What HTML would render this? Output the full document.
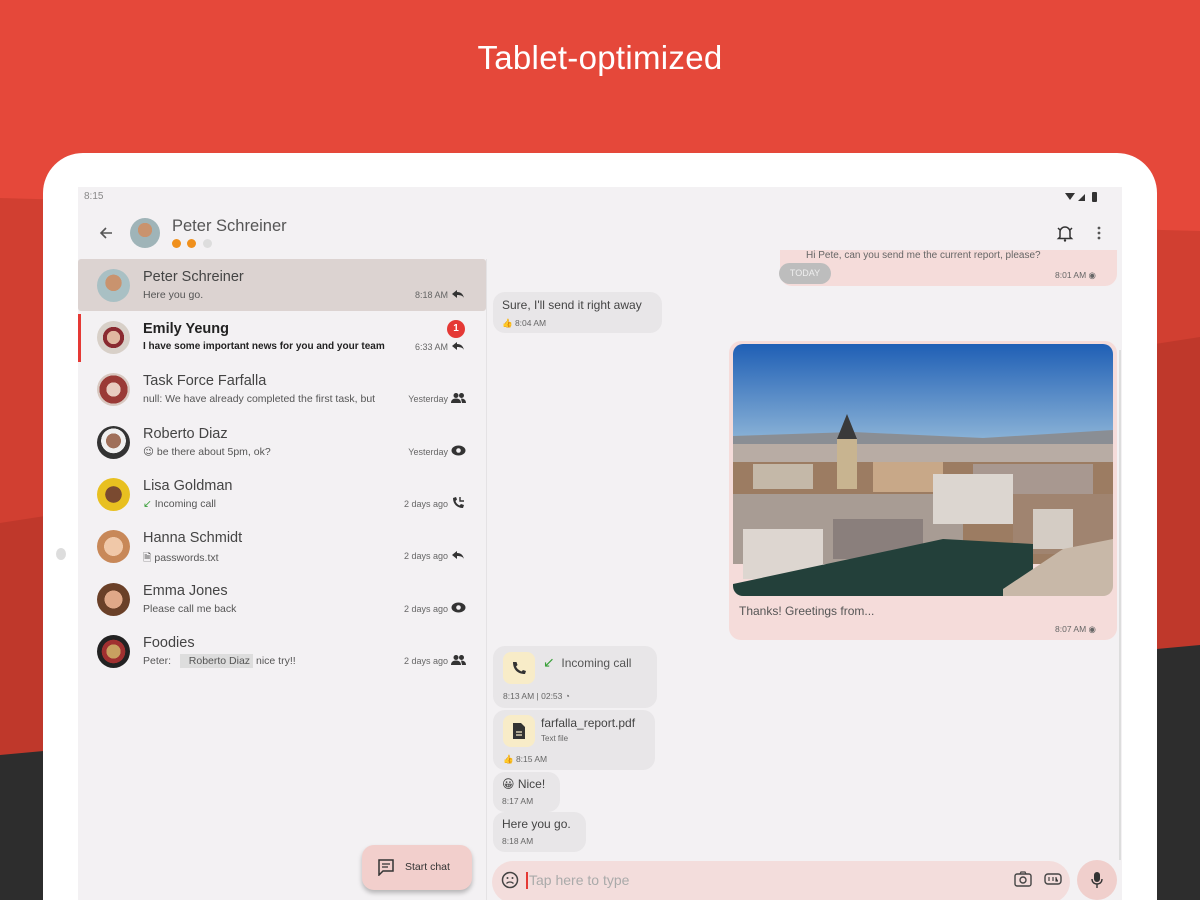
<!DOCTYPE html>
<html><head><meta charset="utf-8"><style>
*{margin:0;padding:0;box-sizing:border-box}
html,body{width:1200px;height:900px;overflow:hidden}
body{position:relative;font-family:"Liberation Sans","DejaVu Sans",sans-serif;background:#e5483a}
.a{position:absolute}
.t{position:absolute;white-space:nowrap}
.av{position:absolute;width:33px;height:33px;border-radius:50%}
.nm{position:absolute;left:143px;font-size:14.5px;color:#444}
.sb{position:absolute;left:143px;font-size:10.5px;color:#555}
.tm{position:absolute;font-size:9px;color:#666;text-align:right}
.ic{position:absolute;left:451px}
.bub{position:absolute;border-radius:12px}
.in{background:#e8e6e8}
.out{background:#f5dcda}
.mt{font-size:8.5px;color:#666}
</style></head><body>
<svg class="a" style="left:0;top:0" width="1200" height="900">
<rect width="1200" height="900" fill="#e5483a"/>
<polygon points="0,198 600,215 1200,231 1200,900 0,900" fill="#d13f31"/>
<polygon points="0,523 600,430 1200,337 1200,900 0,900" fill="#bf382b"/>
<polygon points="0,755 600,700 1200,645 1200,900 0,900" fill="#2d2d2d"/>
</svg>
<div class="t" style="left:0;width:1200px;top:39px;text-align:center;color:#fff;font-size:33px;letter-spacing:0.3px">Tablet-optimized</div>
<div class="a" style="left:43px;top:153px;width:1114px;height:747px;background:#fff;border-radius:40px 40px 0 0"></div>
<div class="a" style="left:56px;top:548px;width:10px;height:12px;border-radius:50%;background:#ddd"></div>
<div class="a" style="left:78px;top:187px;width:1044px;height:713px;background:#f3f1f3"></div>
<!-- status -->
<div class="t" style="left:84px;top:191px;font-size:10px;color:#888">8:15</div>
<svg class="a" style="left:1064px;top:191px" width="40" height="12"><path d="M1 2 L11 2 L6 9Z" fill="#333"/><path d="M14 10 L21 3 L21 10Z" fill="#333"/><rect x="28" y="1" width="5" height="10" rx="1" fill="#333"/></svg>
<!-- header -->
<svg class="a" style="left:98px;top:226px" width="16" height="14"><path d="M14 7H3M8 2L3 7L8 12" stroke="#555" stroke-width="1.6" fill="none"/></svg>
<div class="av" style="left:130px;top:218px;width:30px;height:30px;background:radial-gradient(circle at 50% 40%,#c9936e 0 30%,#9fb4b8 31%)"></div>
<div class="t" style="left:172px;top:217px;font-size:16.5px;color:#555">Peter Schreiner</div>
<div class="a" style="left:172px;top:239px;width:9px;height:9px;border-radius:50%;background:#f0901c"></div>
<div class="a" style="left:187px;top:239px;width:9px;height:9px;border-radius:50%;background:#f0901c"></div>
<div class="a" style="left:203px;top:239px;width:9px;height:9px;border-radius:50%;background:#ddd"></div>
<svg class="a" style="left:1056px;top:224px" width="18" height="18"><path d="M4 13V8a5 5 0 0 1 10 0v5l1.5 1.5h-13Z M2 4l2 2M16 4l-2 2" stroke="#333" stroke-width="1.5" fill="none"/><circle cx="9" cy="16.5" r="1.2" fill="#333"/></svg>
<svg class="a" style="left:1096px;top:225px" width="6" height="16"><circle cx="3" cy="3" r="1.4" fill="#555"/><circle cx="3" cy="8" r="1.4" fill="#555"/><circle cx="3" cy="13" r="1.4" fill="#555"/></svg>
<!-- list -->
<div class="a" style="left:78px;top:259px;width:408px;height:52px;background:#dcd3d1;border-radius:3px"></div>
<div class="a" style="left:78px;top:314px;width:3px;height:48px;background:#e53935"></div>
<div class="a" style="left:486px;top:259px;width:1px;height:641px;background:#e4e2e4"></div>

<div class="av" style="left:97px;top:269px;background:radial-gradient(circle at 50% 42%,#c9936e 0 32%,#a9c0c4 33%)"></div>
<div class="nm" style="top:269px">Peter Schreiner</div><div class="sb" style="top:289px">Here you go.</div>
<div class="tm" style="top:290px;right:752px">8:18 AM</div>
<svg class="ic" style="top:288px" width="14" height="12"><path d="M6 2L1 6L6 10V7c4 0 6 1 7 3-1-4-3-6-7-6Z" fill="#333"/></svg>

<div class="av" style="left:97px;top:321px;background:radial-gradient(circle at 50% 50%,#e0b8a0 0 28%,#8a2a30 29% 45%,#d8d0c8 46%)"></div>
<div class="nm" style="top:321px;font-weight:bold;color:#222">Emily Yeung</div><div class="sb" style="top:341px;font-weight:bold;color:#222;font-size:10px">I have some important news for you and your team</div>
<div class="tm" style="top:342px;right:752px">6:33 AM</div>
<svg class="ic" style="top:340px" width="14" height="12"><path d="M6 2L1 6L6 10V7c4 0 6 1 7 3-1-4-3-6-7-6Z" fill="#333"/></svg>
<div class="a" style="left:447px;top:320px;width:18px;height:18px;border-radius:50%;background:#e53935;color:#fff;font-size:10px;text-align:center;line-height:18px;font-weight:bold">1</div>

<div class="av" style="left:97px;top:373px;background:radial-gradient(circle,#e8ccc0 0 30%,#9a3a36 31% 60%,#d8c8c0 61%)"></div>
<div class="nm" style="top:373px">Task Force Farfalla</div><div class="sb" style="top:393px">null: We have already completed the first task, but</div>
<div class="tm" style="top:394px;right:752px">Yesterday</div>
<svg class="ic" style="top:392px" width="15" height="12"><circle cx="5" cy="3.5" r="2.5" fill="#333"/><circle cx="10.5" cy="3.5" r="2.5" fill="#333"/><path d="M0 11c0-3 2-4.5 5-4.5s5 1.5 5 4.5Z M10 6.5c3 0 5 1.5 5 4.5h-4" fill="#333"/></svg>

<div class="av" style="left:97px;top:426px;background:radial-gradient(circle at 50% 45%,#a0705a 0 30%,#f0f0f0 31% 50%,#333 51%)"></div>
<div class="nm" style="top:426px">Roberto Diaz</div><div class="sb" style="top:446px">😉 be there about 5pm, ok?</div>
<div class="tm" style="top:447px;right:752px">Yesterday</div>
<svg class="ic" style="top:445px" width="15" height="11"><ellipse cx="7.5" cy="5.5" rx="7" ry="5" fill="#333"/><circle cx="7.5" cy="5.5" r="2.3" fill="#f3f1f3"/></svg>

<div class="av" style="left:97px;top:478px;background:radial-gradient(circle at 50% 50%,#7a4a30 0 35%,#e8c020 36%)"></div>
<div class="nm" style="top:478px">Lisa Goldman</div><div class="sb" style="top:498px"><span style="color:#3aa03a">↙</span> Incoming call</div>
<div class="tm" style="top:499px;right:752px">2 days ago</div>
<svg class="ic" style="top:496px" width="14" height="14"><path d="M2 2c0 6 4 10 10 10l1-3-3-1-1.5 1.5C6.5 8.5 5 7 4.5 5L6 3.5 5 1Z" fill="#333"/><path d="M9 1v4h4" stroke="#333" stroke-width="1.4" fill="none"/></svg>

<div class="av" style="left:97px;top:530px;background:radial-gradient(circle at 50% 50%,#f0c8a8 0 40%,#c88858 41%)"></div>
<div class="nm" style="top:530px">Hanna Schmidt</div><div class="sb" style="top:550px">🗎 passwords.txt</div>
<div class="tm" style="top:551px;right:752px">2 days ago</div>
<svg class="ic" style="top:549px" width="14" height="12"><path d="M6 2L1 6L6 10V7c4 0 6 1 7 3-1-4-3-6-7-6Z" fill="#333"/></svg>

<div class="av" style="left:97px;top:583px;background:radial-gradient(circle at 50% 50%,#e0a888 0 38%,#6a4028 39%)"></div>
<div class="nm" style="top:583px">Emma Jones</div><div class="sb" style="top:603px">Please call me back</div>
<div class="tm" style="top:604px;right:752px">2 days ago</div>
<svg class="ic" style="top:602px" width="15" height="11"><ellipse cx="7.5" cy="5.5" rx="7" ry="5" fill="#333"/><circle cx="7.5" cy="5.5" r="2.3" fill="#f3f1f3"/></svg>

<div class="av" style="left:97px;top:635px;background:radial-gradient(circle at 50% 50%,#c8a060 0 30%,#a03030 31% 50%,#222 51%)"></div>
<div class="nm" style="top:635px">Foodies</div><div class="sb" style="top:655px">Peter: <span style="background:#ddd;padding:1px 3px;margin-left:6px">&nbsp;&nbsp;Roberto Diaz</span> nice try!!</div>
<div class="tm" style="top:656px;right:752px">2 days ago</div>
<svg class="ic" style="top:654px" width="15" height="12"><circle cx="5" cy="3.5" r="2.5" fill="#333"/><circle cx="10.5" cy="3.5" r="2.5" fill="#333"/><path d="M0 11c0-3 2-4.5 5-4.5s5 1.5 5 4.5Z M10 6.5c3 0 5 1.5 5 4.5h-4" fill="#333"/></svg>

<div class="a" style="left:362px;top:845px;width:110px;height:45px;background:#f2cfcc;border-radius:12px;box-shadow:0 3px 5px rgba(0,0,0,.25)"></div>
<svg class="a" style="left:377px;top:858px" width="18" height="18"><path d="M2 2h14v11H6l-4 4Z" stroke="#333" stroke-width="1.5" fill="none"/><path d="M5 6h8M5 9h6" stroke="#333" stroke-width="1.3"/></svg>
<div class="t" style="left:405px;top:861px;font-size:10.5px;color:#333">Start chat</div>

<!-- chat -->
<div class="bub out" style="left:780px;top:250px;width:337px;height:36px;border-radius:0 0 12px 12px"></div>
<div class="t" style="left:806px;top:250px;font-size:10px;color:#666">Hi Pete, can you send me the current report, please?</div>
<div class="t mt" style="left:1055px;top:270px">8:01 AM ◉</div>
<div class="a" style="left:779px;top:263px;width:52px;height:21px;border-radius:11px;background:#bdbdbd;color:#eee;font-size:9px;text-align:center;line-height:21px">TODAY</div>

<div class="bub in" style="left:493px;top:292px;width:169px;height:41px"></div>
<div class="t" style="left:502px;top:298px;font-size:12px;color:#444">Sure, I'll send it right away</div>
<div class="t mt" style="left:502px;top:318px"><span style="color:#3a9a3a">👍</span> 8:04 AM</div>

<div class="bub out" style="left:729px;top:341px;width:388px;height:299px"></div>
<svg class="a" style="left:733px;top:344px" width="380" height="252"><defs><clipPath id="c"><rect width="380" height="252" rx="10"/></clipPath><linearGradient id="s" x1="0" y1="0" x2="0" y2="1"><stop offset="0" stop-color="#1f5fb5"/><stop offset="1" stop-color="#8fb6d8"/></linearGradient></defs>
<g clip-path="url(#c)"><rect width="380" height="100" fill="url(#s)"/>
<polygon points="0,92 120,88 250,94 380,86 380,110 0,110" fill="#8a8e94"/>
<rect y="100" width="380" height="120" fill="#9c7c62"/>
<rect x="0" y="100" width="380" height="18" fill="#b8aca4"/>
<rect x="20" y="120" width="60" height="25" fill="#c4b8a8"/>
<rect x="140" y="118" width="70" height="30" fill="#c8a888"/>
<rect x="240" y="120" width="120" height="30" fill="#a89890"/>
<rect x="0" y="150" width="230" height="70" fill="#a89c94"/>
<rect x="10" y="185" width="80" height="50" fill="#ddd6d0"/>
<rect x="100" y="175" width="90" height="40" fill="#8a7f7c"/>
<rect x="200" y="130" width="80" height="50" fill="#dcd6d0"/>
<rect x="280" y="150" width="100" height="60" fill="#a08470"/>
<rect x="300" y="165" width="40" height="40" fill="#d4ccc4"/>
<polygon points="0,240 210,195 300,200 300,252 0,252" fill="#23403a"/>
<polygon points="270,245 330,205 380,195 380,252 270,252" fill="#c8b8a8"/>
<rect x="104" y="95" width="20" height="50" fill="#c8b490"/><polygon points="104,95 114,70 124,95" fill="#3a3a3a"/>
</g></svg>
<div class="t" style="left:739px;top:604px;font-size:12px;color:#555">Thanks! Greetings from...</div>
<div class="t mt" style="left:1055px;top:624px">8:07 AM ◉</div>
<div class="a" style="left:1119px;top:350px;width:2px;height:510px;background:#ddd"></div>

<div class="bub in" style="left:493px;top:646px;width:164px;height:62px"></div>
<div class="a" style="left:503px;top:652px;width:32px;height:32px;border-radius:8px;background:#f8ecc8"></div>
<svg class="a" style="left:511px;top:660px" width="16" height="16"><path d="M2 2c0 7 4 12 12 12l1-3-3-1-1.5 1.5C7.5 10 6 8.5 5 6.5L6.5 5 5.5 2Z" fill="#333"/></svg>
<div class="t" style="left:543px;top:654px;font-size:12px;color:#555"><span style="color:#3aa03a;font-size:14px">↙</span>&nbsp; Incoming call</div>
<div class="t mt" style="left:503px;top:691px">8:13 AM | 02:53 ◔</div>

<div class="bub in" style="left:493px;top:710px;width:162px;height:60px"></div>
<div class="a" style="left:503px;top:715px;width:32px;height:32px;border-radius:8px;background:#f8ecc8"></div>
<svg class="a" style="left:512px;top:722px" width="14" height="18"><path d="M1 1h8l4 4v12H1Z" fill="#333"/><path d="M4 10h6M4 13h6" stroke="#f8ecc8" stroke-width="1.3"/></svg>
<div class="t" style="left:541px;top:716px;font-size:12px;color:#444">farfalla_report.pdf</div>
<div class="t" style="left:541px;top:734px;font-size:8px;color:#666">Text file</div>
<div class="t mt" style="left:503px;top:754px"><span style="color:#3a9a3a">👍</span> 8:15 AM</div>

<div class="bub in" style="left:493px;top:772px;width:67px;height:40px"></div>
<div class="t" style="left:502px;top:777px;font-size:12px;color:#444">😀 Nice!</div>
<div class="t mt" style="left:502px;top:796px">8:17 AM</div>
<div class="bub in" style="left:493px;top:812px;width:93px;height:40px"></div>
<div class="t" style="left:502px;top:817px;font-size:12px;color:#444">Here you go.</div>
<div class="t mt" style="left:502px;top:836px">8:18 AM</div>

<div class="a" style="left:492px;top:861px;width:578px;height:42px;border-radius:21px;background:#f3dddc"></div>
<svg class="a" style="left:501px;top:871px" width="18" height="18"><circle cx="9" cy="9" r="7.5" stroke="#444" stroke-width="1.5" fill="none"/><circle cx="6.5" cy="7" r="1" fill="#444"/><circle cx="11.5" cy="7" r="1" fill="#444"/><path d="M5.5 12.5c2-2 5-2 7 0" stroke="#444" stroke-width="1.3" fill="none"/></svg>
<div class="a" style="left:526px;top:872px;width:2px;height:17px;background:#e53935"></div>
<div class="t" style="left:529px;top:872px;font-size:14px;color:#aaa">Tap here to type</div>
<svg class="a" style="left:1014px;top:871px" width="18" height="16"><rect x="1" y="3" width="16" height="12" rx="2" stroke="#444" stroke-width="1.4" fill="none"/><circle cx="9" cy="9" r="3" stroke="#444" stroke-width="1.4" fill="none"/><path d="M6 3l1-2h4l1 2" stroke="#444" stroke-width="1.2" fill="none"/></svg>
<svg class="a" style="left:1044px;top:873px" width="18" height="12"><rect x="1" y="1" width="16" height="10" rx="3" stroke="#444" stroke-width="1.4" fill="none"/><path d="M5 4v4M9 4v4M12 4v4h2" stroke="#444" stroke-width="1.2"/></svg>
<div class="a" style="left:1077px;top:860px;width:40px;height:40px;border-radius:50%;background:#f0cfcc"></div>
<svg class="a" style="left:1091px;top:871px" width="12" height="18"><rect x="3" y="1" width="6" height="10" rx="3" fill="#333"/><path d="M1 8c0 3 2 5 5 5s5-2 5-5M6 13v4" stroke="#333" stroke-width="1.4" fill="none"/></svg>
</body></html>
